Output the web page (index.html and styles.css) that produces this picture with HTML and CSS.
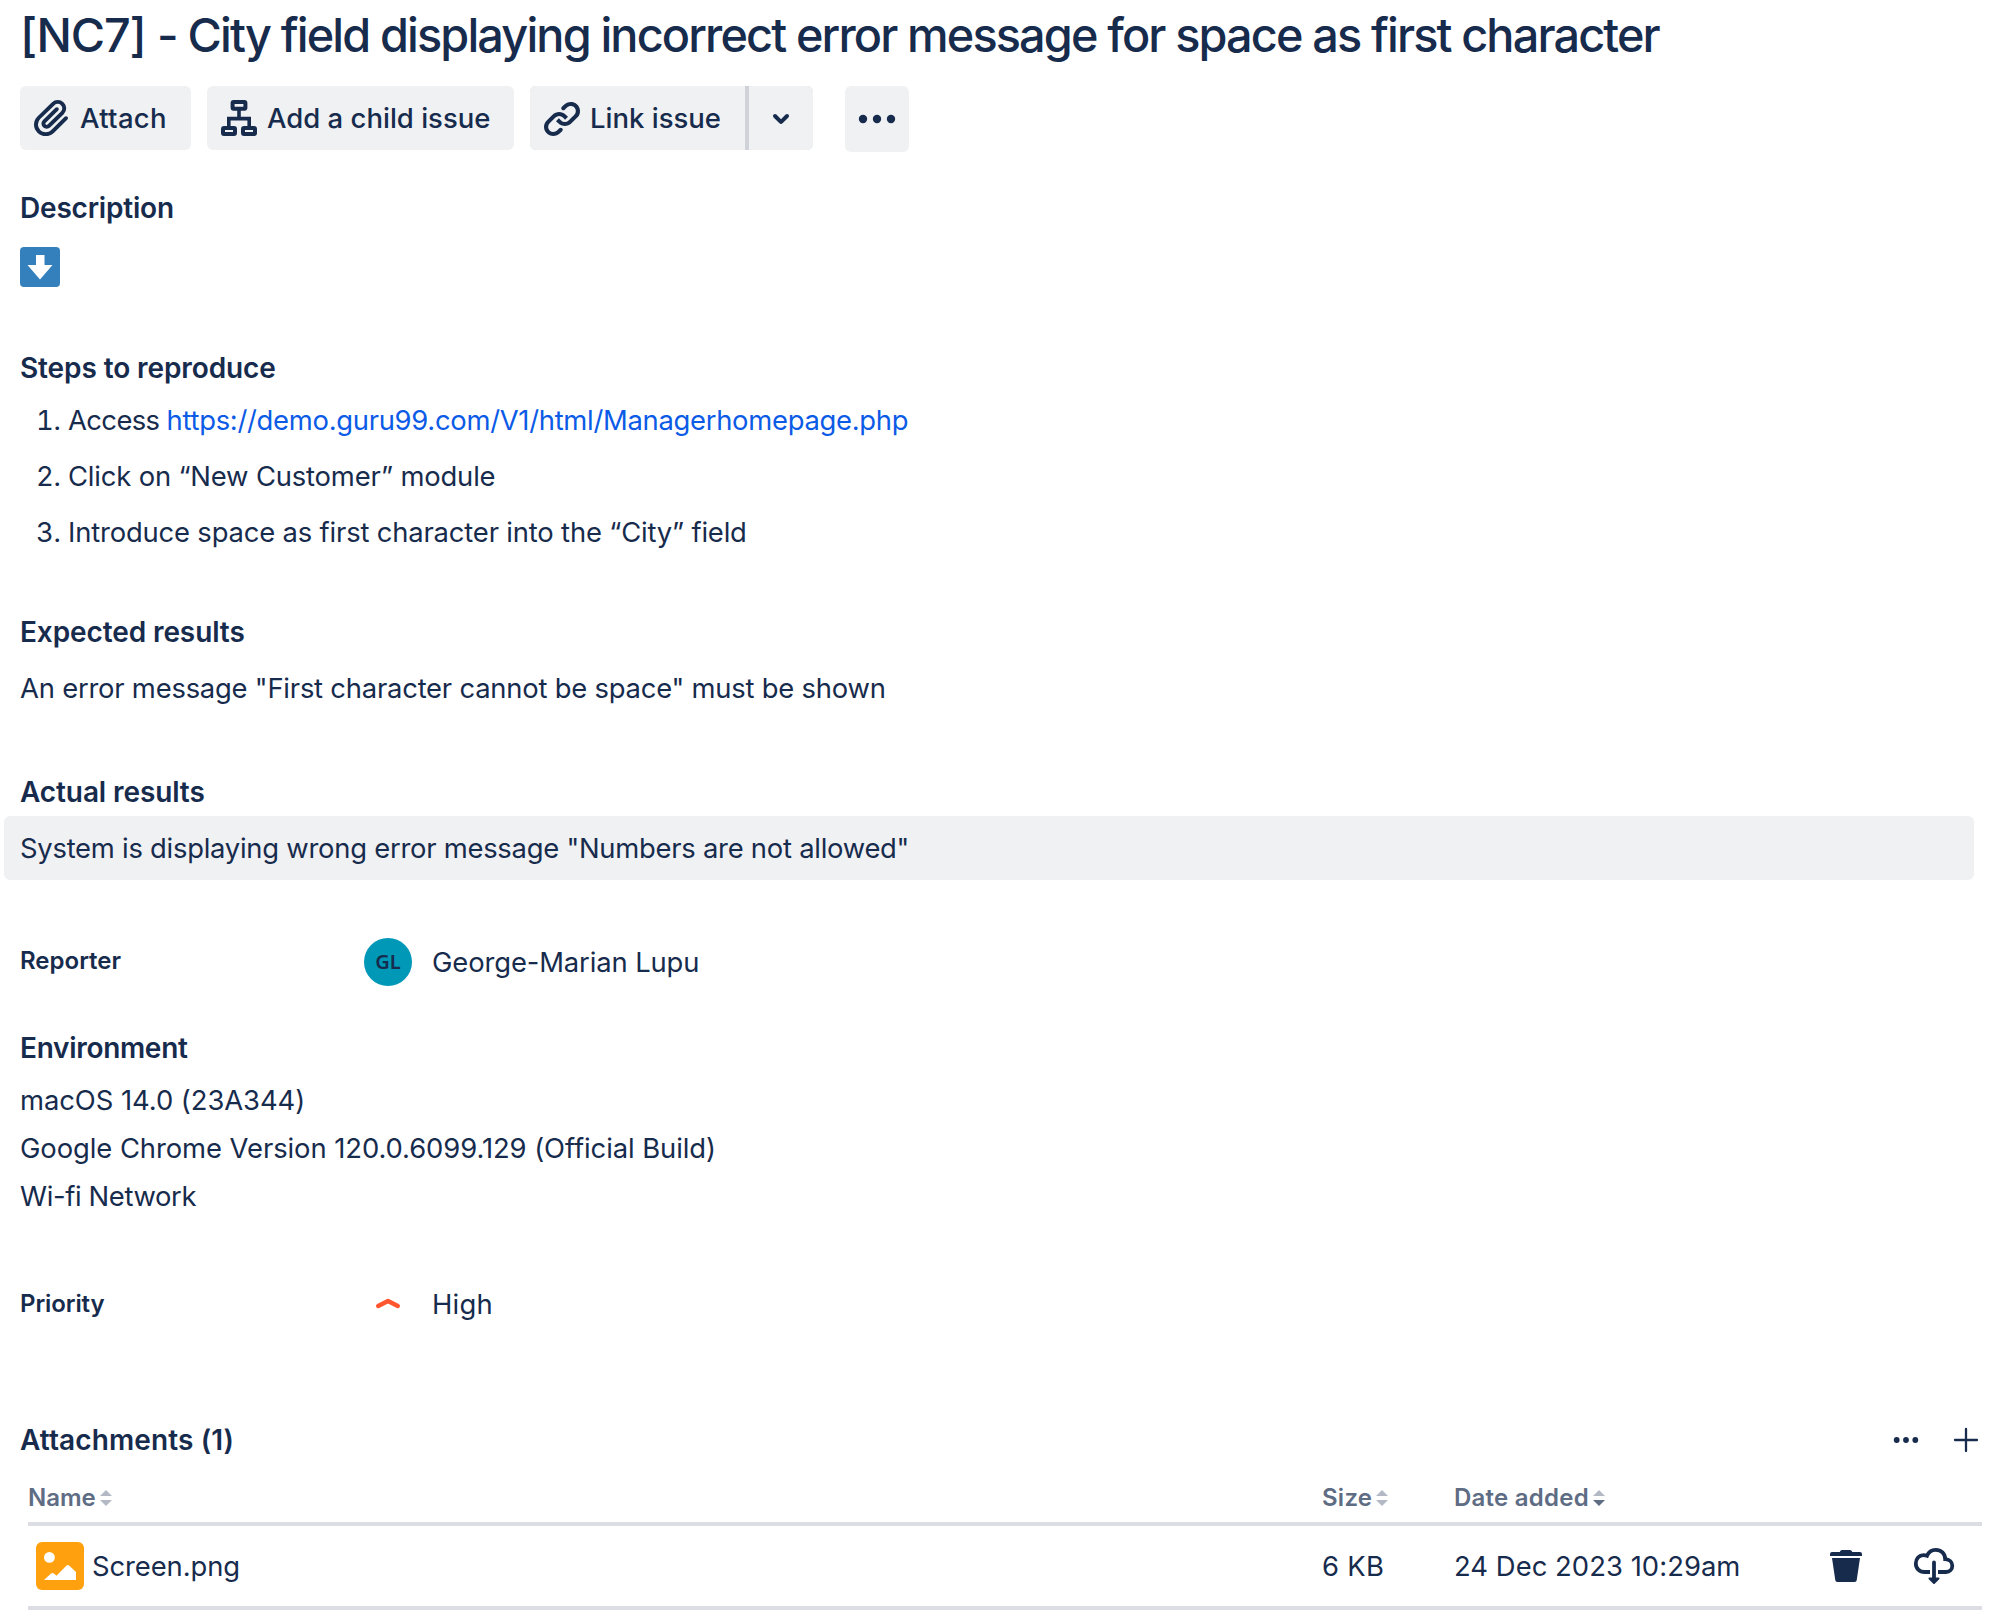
FILE: index.html
```html
<!DOCTYPE html>
<html lang="en">
<head>
<meta charset="utf-8">
<title>[NC7] - City field displaying incorrect error message for space as first character</title>
<link rel="stylesheet" href="styles.css">
</head>
<body>
<main class="issue">
  <h1 class="title"><span class="title-key">[NC7] </span>- City field displaying incorrect error message for space as first character</h1>

  <div class="toolbar">
    <button class="btn btn-attach">
      <svg class="icon" viewBox="0 0 24 24"><path fill="currentColor" d="M11.643 17.965c-1.53 1.495-4.016 1.496-5.542.004a3.773 3.773 0 01.002-5.412l7.147-6.985a2.316 2.316 0 013.233-.003c.893.873.895 2.282.004 3.153l-6.703 6.55a.653.653 0 01-.914-.008.62.62 0 010-.902l6.229-6.087a.941.941 0 000-1.353.995.995 0 00-1.384 0l-6.23 6.087a2.502 2.502 0 000 3.607 2.643 2.643 0 003.683.009l6.703-6.55a4.074 4.074 0 00-.003-5.859 4.306 4.306 0 00-6.002.003l-7.148 6.985a5.655 5.655 0 00-.001 8.118c2.29 2.239 6.015 2.238 8.31-.005l6.686-6.533a.941.941 0 000-1.353.995.995 0 00-1.384 0l-6.686 6.534z"/></svg>
      <span>Attach</span>
    </button>
    <button class="btn btn-child">
      <svg class="icon" viewBox="0 0 24 24" fill="none" stroke="currentColor" stroke-width="2"><rect x="8.8" y="4" width="6.4" height="3.4" rx=".5"/><rect x="4" y="17" width="6" height="3" rx=".5"/><rect x="14" y="17" width="6" height="3" rx=".5"/><path stroke-width="1.8" d="M12 8v4M6.9 16.5v-4.2h10.2v4.2"/></svg>
      <span>Add a child issue</span>
    </button>
    <div class="split">
      <button class="btn btn-link">
        <svg class="icon" viewBox="0 0 24 24" fill="currentColor"><path d="M12.856 5.457l-.937.92a1.002 1.002 0 000 1.437 1.047 1.047 0 001.463 0l.984-.966c.967-.95 2.542-1.135 3.602-.288a2.54 2.54 0 01.203 3.81l-2.903 2.852a2.646 2.646 0 01-3.696 0l-1.11-1.09L9 13.57l1.108 1.089c1.822 1.788 4.802 1.788 6.622 0l2.905-2.852a4.558 4.558 0 00-.357-6.82c-1.893-1.517-4.695-1.226-6.422.47"/><path d="M11.144 19.543l.937-.92a1.002 1.002 0 000-1.437 1.047 1.047 0 00-1.462 0l-.985.966c-.967.95-2.542 1.135-3.602.288a2.54 2.54 0 01-.203-3.81l2.903-2.852a2.646 2.646 0 013.696 0l1.11 1.09L15 11.43l-1.108-1.089c-1.822-1.788-4.802-1.788-6.622 0l-2.905 2.852a4.558 4.558 0 00.357 6.82c1.893 1.517 4.695 1.226 6.422-.47"/></svg>
        <span>Link issue</span>
      </button>
      <button class="btn btn-caret" aria-label="Link options">
        <svg class="icon" viewBox="0 0 24 24"><path fill="currentColor" d="M8.292 10.293a1.009 1.009 0 000 1.419l2.939 2.965c.218.215.5.322.779.322s.556-.107.769-.322l2.93-2.955a1.01 1.01 0 000-1.419.987.987 0 00-1.406 0l-2.298 2.317-2.307-2.327a.99.99 0 00-1.406 0z"/></svg>
      </button>
    </div>
    <button class="btn btn-more" aria-label="More actions">
      <svg class="icon" viewBox="0 0 48 48" fill="currentColor"><circle cx="10" cy="24" r="4.2"/><circle cx="24" cy="24" r="4.2"/><circle cx="38" cy="24" r="4.2"/></svg>
    </button>
  </div>

  <section class="description">
    <h2 class="heading heading-description">Description</h2>
    <svg class="emoji" viewBox="0 0 40 40"><rect width="40" height="40" rx="4" fill="#3480bd"/><path fill="#fff" d="M16 8h8.500v10H32.500L20 32.500 7.500 18H16z"/></svg>

    <h2 class="heading heading-steps">Steps to reproduce</h2>
    <ol class="steps">
      <li><span class="access">Access </span><a class="url" href="#">https://demo.guru99.com/V1/html/Managerhomepage.php</a></li>
      <li>Click on “New Customer” module</li>
      <li>Introduce space as first character into the “City” field</li>
    </ol>

    <h2 class="heading heading-expected">Expected results</h2>
    <p class="expected">An error message "First character cannot be space" must be shown</p>

    <h2 class="heading heading-actual">Actual results</h2>
    <p class="actual">System is displaying wrong error message "Numbers are not allowed"</p>
  </section>

  <div class="field field-reporter">
    <span class="label label-reporter">Reporter</span>
    <span class="avatar">GL</span>
    <span class="value value-name">George-Marian Lupu</span>
  </div>

  <section>
    <h2 class="heading heading-environment">Environment</h2>
    <p class="environment"><span class="env-os">macOS 14.0 (23A344)</span><span class="env-browser">Google Chrome Version 120.0.6099.129 (Official Build)</span><span class="env-network">Wi-fi Network</span></p>
  </section>

  <div class="field field-priority">
    <span class="label">Priority</span>
    <svg class="icon" viewBox="0 0 48 48"><path d="M14.200 26 24 21l9.800 5" fill="none" stroke="#ff5630" stroke-width="4.400" stroke-linecap="round" stroke-linejoin="round"/></svg>
    <span class="value value-high">High</span>
  </div>

  <section class="attachments">
    <header class="attachments-header">
      <h2 class="heading heading-attachments">Attachments (1)</h2>
      <svg class="icon" viewBox="0 0 48 48" fill="currentColor"><circle cx="14.700" cy="24" r="2.900"/><circle cx="24" cy="24" r="2.900"/><circle cx="33.300" cy="24" r="2.900"/></svg>
      <svg class="icon" viewBox="0 0 48 48"><path d="M24 13v22M13 24h22" stroke="currentColor" stroke-width="2.300" stroke-linecap="round"/></svg>
    </header>
    <div class="table">
      <div class="row row-head">
        <span class="col col-name">Name<svg class="sort" viewBox="0 0 12 16"><path class="arrow" d="M6 0l6 6H0z"/><path class="arrow" d="M6 16l6-6H0z"/></svg></span>
        <span class="col">Size<svg class="sort" viewBox="0 0 12 16"><path class="arrow" d="M6 0l6 6H0z"/><path class="arrow" d="M6 16l6-6H0z"/></svg></span>
        <span class="col">Date added<svg class="sort" viewBox="0 0 12 16"><path class="arrow" d="M6 0l6 6H0z"/><path class="arrow arrow-active" d="M6 16l6-6H0z"/></svg></span>
      </div>
      <div class="row row-file">
        <span class="file">
          <svg class="icon" viewBox="0 0 48 48"><rect width="48" height="48" rx="6" fill="#ffa00f"/><circle cx="13.400" cy="15.400" r="5.400" fill="#fff"/><path fill="#fff" d="M8 38l7-6.500q1.500-1.200 3 0l2.500 2.200 9.500-9.800q1.800-1.600 3.600 0L40 30v8z"/></svg>
          Screen.png
        </span>
        <span class="size">6 KB</span>
        <span class="date">24 Dec 2023 10:29am</span>
        <svg class="icon" viewBox="0 0 48 48" fill="currentColor"><path d="M18 9.500q.4-1.500 2-1.500h8q1.600 0 2 1.500l.2.500H38q2 0 2 2v2H8v-2q0-2 2-2h7.800zM10 16h28l-3.300 22.300q-.3 1.700-2 1.700H15.300q-1.700 0-2-1.700z"/></svg>
        <svg class="icon" viewBox="0 0 48 48" fill="none" stroke="currentColor" stroke-width="3.800"><path d="M22 30h-5.500c-5 0-8.700-3.700-8.700-8.600 0-4.800 3.300-8.200 7.700-8.200 1.300 0 2.500.2 3.500.6 1.500-3.700 4.800-6 8.700-6 5.400 0 9.500 3.900 9.500 9.400 4.100.2 7.100 2.800 7.100 6.500 0 3.500-2.600 6.300-6.300 6.300h-8"/><path stroke-linecap="round" d="M26 20.500V38"/><path fill="currentColor" stroke-width="2" stroke-linejoin="round" d="M21.500 36.500h9L26 41z"/></svg>
      </div>
    </div>
  </section>
</main>
</body>
</html>
```
FILE: styles.css
```css
* {
  box-sizing: border-box;
}

body {
  margin: 0;
  background: #fff;
  color: #172b4d;
  font: 400 27.4px/48px Inter, "Liberation Sans", sans-serif;
}

h1,
h2,
p,
ol {
  margin: 0;
}

.issue {
  padding: 7px 18px 0 20px;
}

.icon {
  display: block;
  flex: none;
  width: 48px;
  height: 48px;
}

.title {
  font-size: 46.8px;
  font-weight: 500;
  line-height: 56px;
  letter-spacing: -1.85px;
  white-space: nowrap;
}

.title-key {
  letter-spacing: -1.1px;
}

/* Toolbar */
.toolbar {
  display: flex;
  align-items: flex-start;
  height: 66px;
  margin-top: 23px;
}

.btn {
  display: flex;
  align-items: center;
  gap: 4px;
  height: 64px;
  padding: 0 8px;
  border: 0;
  border-radius: 6px;
  background: #f0f1f3;
  color: inherit;
  font: inherit;
  font-size: 27.5px;
  font-weight: 500;
  white-space: nowrap;
}

.btn-attach {
  width: 171px;
  letter-spacing: .3px;
}

.btn-child {
  width: 307px;
  margin-left: 16px;
}

.split {
  display: flex;
  gap: 4px;
  margin-left: 16px;
  border-radius: 6px;
  background: #cfd2d8;
}

.btn-link {
  width: 215px;
  border-radius: 6px 0 0 6px;
}

.btn-caret {
  width: 64px;
  border-radius: 0 6px 6px 0;
}

.btn-more {
  width: 64px;
  height: 66px;
  margin-left: 32px;
}

/* Description */
.heading {
  font-size: 28px;
  font-weight: 600;
  line-height: 32px;
  letter-spacing: -.1px;
}

.heading-description {
  margin-top: 40px;
  letter-spacing: -.2px;
}

.emoji {
  display: block;
  width: 40px;
  height: 40px;
  margin-top: 23px;
}

.heading-steps {
  margin-top: 65px;
}

.steps {
  display: flex;
  flex-direction: column;
  gap: 8px;
  margin-top: 12px;
  padding-left: 48px;
  letter-spacing: -.17px;
}

.access {
  letter-spacing: -.6px;
}

.url {
  color: #0c5be6;
  letter-spacing: -.285px;
  text-decoration: none;
}

.heading-expected {
  margin-top: 60px;
}

.expected {
  margin-top: 16px;
  letter-spacing: -.215px;
}

.heading-actual {
  margin-top: 64px;
}

.actual {
  margin: 8px 16px 0 -16px;
  padding: 8px 16px;
  border-radius: 6px;
  background: #f0f1f3;
  letter-spacing: -.25px;
}

/* Label / value fields */
.field {
  display: flex;
  align-items: center;
  height: 48px;
}

.field-reporter {
  margin-top: 58px;
}

.field-priority {
  margin-top: 60px;
}

.label {
  width: 344px;
  padding-bottom: 1px;
  font-size: 24px;
  font-weight: 600;
  letter-spacing: -.1px;
}

.label-reporter {
  padding-bottom: 3px;
  letter-spacing: 0;
}

.avatar {
  width: 48px;
  height: 48px;
  border-radius: 50%;
  background: #0098b7;
  font: 600 20px/48px "Noto Sans", sans-serif;
  text-align: center;
}

.value {
  margin-left: 20px;
}

.value-name {
  letter-spacing: -.12px;
}

.value-high {
  letter-spacing: .2px;
}

/* Environment */
.heading-environment {
  margin-top: 46px;
  letter-spacing: -.3px;
}

.environment {
  display: flex;
  flex-direction: column;
  margin-top: 12px;
}

.env-os {
  letter-spacing: -.05px;
}

.env-browser {
  letter-spacing: -.07px;
}

.env-network {
  letter-spacing: -.36px;
}

/* Attachments */
.attachments {
  margin-top: 88px;
}

.attachments-header {
  display: flex;
  align-items: center;
  gap: 12px;
  height: 48px;
}

.heading-attachments {
  flex: 1;
  letter-spacing: .12px;
}

.table {
  margin: 18px 8px 0;
}

.row {
  display: grid;
  grid-template-columns: 1294px 132px 368px 86px 74px;
  align-items: center;
  border-bottom: 4px solid #dddee3;
}

.row-head {
  height: 44px;
  padding-bottom: 8px;
  color: #5e6c84;
  font-size: 24px;
  font-weight: 600;
  line-height: 32px;
  letter-spacing: .25px;
}

.col {
  display: flex;
  align-items: center;
  gap: 4px;
}

.col-name {
  letter-spacing: 0;
}

.sort {
  width: 12px;
  height: 16px;
}

.arrow {
  fill: #b3b9c4;
}

.arrow-active {
  fill: #5e6c84;
}

.row-file {
  height: 84px;
}

.file {
  display: flex;
  gap: 8px;
  padding-left: 8px;
  letter-spacing: -.09px;
}

.size {
  letter-spacing: .3px;
}

.date {
  letter-spacing: .05px;
}
```
